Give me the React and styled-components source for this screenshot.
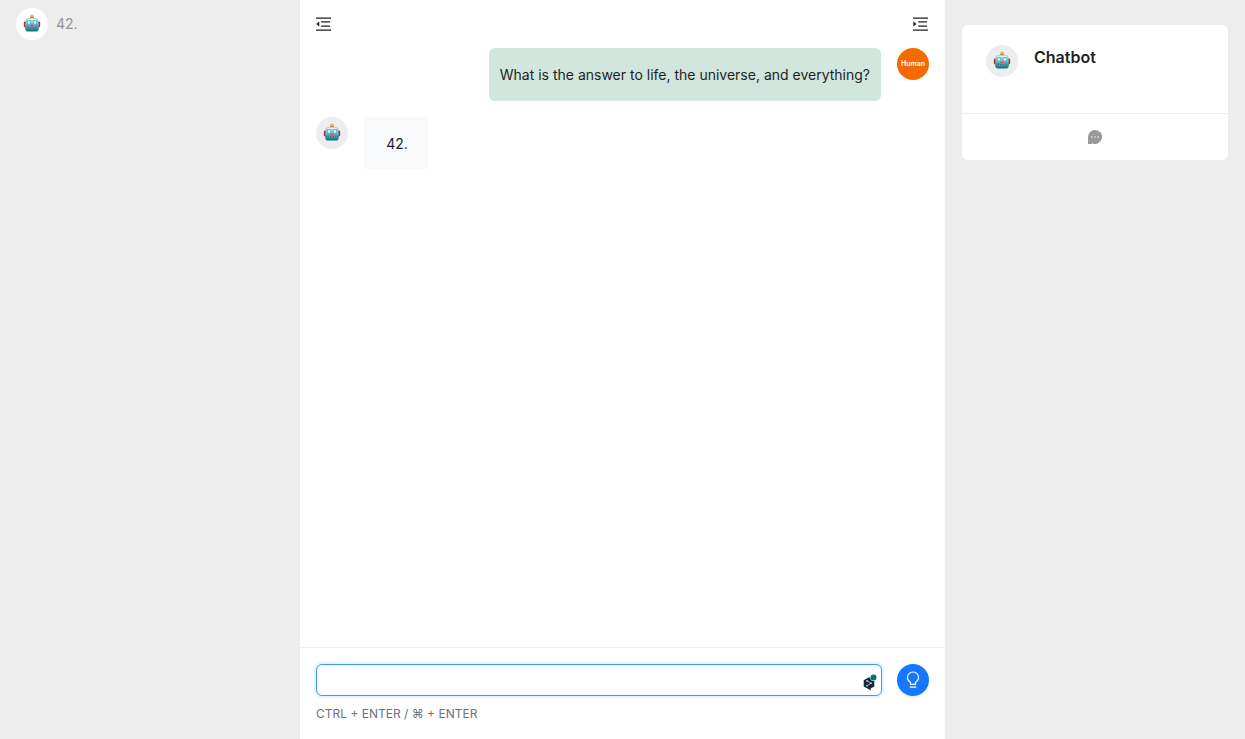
import React from "react";
import styled, { createGlobalStyle } from "styled-components";

const GlobalStyle = createGlobalStyle`
  *, *::before, *::after { box-sizing: border-box; }
  body {
    margin: 0;
    background: #fff;
    color: #1f1f1f;
    font: 14px/22px Inter, "Liberation Sans", sans-serif;
  }
  button, textarea { font: inherit; }
`;

const Layout = styled.div`
  display: grid;
  grid-template-columns: 300px minmax(0, 1fr) 300px;
  min-height: 100vh;
`;

const Sidebar = styled.nav`
  background: #ededed;
  padding: 8px 16px;
`;

const Conversation = styled.a`
  display: flex;
  align-items: center;
  gap: 8px;
  color: #929292;
  text-decoration: none;
`;

const Avatar = styled.span`
  display: flex;
  flex: none;
  align-items: center;
  justify-content: center;
  width: 32px;
  height: 32px;
  border-radius: 50%;
  background: ${(p) => p.$fill || "#ededed"};
  color: #fff;
  font-size: 7px;
  font-weight: 600;
  line-height: 32px;
`;

const Main = styled.main`
  display: flex;
  flex-direction: column;
`;

const Toolbar = styled.header`
  display: flex;
  justify-content: space-between;
  align-items: center;
  height: 48px;
  padding: 0 16px;
`;

const IconButton = styled.button`
  display: flex;
  align-items: center;
  justify-content: center;
  padding: 0;
  border: 0;
  background: none;
  color: #1f1f1f;
  cursor: pointer;
`;

const Messages = styled.section`
  display: flex;
  flex: 1;
  flex-direction: column;
  gap: 16px;
  padding: 0 16px;
`;

const Message = styled.article`
  display: flex;
  align-items: flex-start;
  gap: 16px;
  flex-direction: ${(p) => (p.$own ? "row-reverse" : "row")};
`;

const Bubble = styled.p`
  min-width: 64px;
  margin: 0;
  padding: ${(p) => (p.$own ? "16px 11px" : "16px 16px 16px 18px")};
  border-radius: 6px;
  background: ${(p) => (p.$own ? "#d1e6dd" : "#f8f9fb")};
  line-height: 21px;
  text-align: ${(p) => (p.$own ? "left" : "center")};
`;

const Composer = styled.form`
  padding: 16px 16px 15px;
  border-top: 1px solid #f2f2f2;
`;

const InputRow = styled.div`
  display: flex;
  gap: 15px;
`;

const Field = styled.div`
  display: flex;
  position: relative;
  flex: 1;
`;

const Prompt = styled.textarea`
  width: 100%;
  height: 32px;
  padding: 4px 24px 4px 10px;
  border: 1px solid #4096ff;
  border-radius: 6px;
  outline: 0;
  box-shadow: 0 0 0 2px rgba(5, 145, 255, 0.1);
  resize: none;
`;

const Extension = styled.span`
  display: flex;
  position: absolute;
  right: 5px;
  bottom: 5px;
`;

const Send = styled.button`
  display: flex;
  flex: none;
  align-items: center;
  justify-content: center;
  width: 32px;
  height: 32px;
  padding: 0;
  border: 0;
  border-radius: 50%;
  background: #1677ff;
  color: #fff;
  box-shadow: 0 2px 0 rgba(5, 145, 255, 0.1);
  cursor: pointer;
`;

const Hint = styled.p`
  margin: 8px 0 0;
  color: #6b7280;
  font-size: 12px;
  line-height: 20px;
`;

const Aside = styled.aside`
  padding: 25px 17px;
  background: #ededed;
`;

const Card = styled.section`
  overflow: hidden;
  border-radius: 6px;
  background: #fff;
`;

const CardBody = styled.div`
  display: flex;
  gap: 16px;
  height: 88px;
  padding: 20px 24px;
`;

const CardTitle = styled.h2`
  margin: 0;
  font-size: 16px;
  font-weight: 600;
  line-height: 24px;
`;

const CardActions = styled.footer`
  display: flex;
  align-items: center;
  justify-content: center;
  height: 47px;
  border-top: 1px solid #ededed;
`;

function Robot() {
  return (
    <svg width="18" height="20" viewBox="0 0 18 20" role="img" aria-label="Robot">
      <defs>
        <linearGradient id="robotFace" x1="0" y1="0" x2="0" y2="1">
          <stop offset="0" stopColor="#b9d3d8" />
          <stop offset="0.4" stopColor="#8ac2ca" />
          <stop offset="0.65" stopColor="#43a0ab" />
          <stop offset="1" stopColor="#08717f" />
        </linearGradient>
      </defs>
      <rect x=".8" y="7.500" width="3.400" height="6" rx="1.400" fill="#ad343c" />
      <rect x="13.800" y="7.500" width="3.400" height="6" rx="1.400" fill="#ad343c" />
      <path d="M7.200 4.600V3h3.600v1.600Z" fill="#66757b" />
      <path d="M7.200 3.400V2.300a1.800 1.800 0 0 1 3.600 0v1.100Z" fill="#f5b03d" />
      <path d="M5.200 4h7.600q2.300 0 2.500 2.300l.6 7.600q.1 3.600-3.500 3.600H5.600q-3.600 0-3.500-3.600l.6-7.600Q2.900 4 5.200 4Z" fill="url(#robotFace)" />
      <path d="M5.300 4.900h7.400q1.200 0 1.400 1.400H3.900q.2-1.400 1.400-1.400Z" fill="#e4efef" />
      <circle cx="6" cy="8.400" r="2.300" fill="#48b9c8" />
      <circle cx="12" cy="8.400" r="2.300" fill="#48b9c8" />
      <circle cx="6" cy="8.400" r="1.400" fill="#e4fafa" />
      <circle cx="12" cy="8.400" r="1.400" fill="#e4fafa" />
      <path d="m9 9.400 1.500 2.500h-3Z" fill="#e94b45" />
      <path d="M4.300 12.500q4.700 1.300 9.400 0-.3 2.800-4.700 2.800t-4.700-2.800Z" fill="#49717a" />
      <path d="M6.500 13.200v1.400M9 13.400v1.500M11.500 13.200v1.400" stroke="#a6b7b8" strokeWidth=".7" />
    </svg>
  );
}

function MenuIcon({ open }) {
  return (
    <svg width="16" height="14" viewBox="0 0 16 14" fill="currentColor" aria-hidden="true">
      <path d="M0 .4h15v1.300H0zM0 12.400h15v1.300H0z" />
      <path d="M5.200 4.300H14v1.200H5.200zM5.200 8.500H14v1.200H5.200z" />
      <path d={open ? "M.4 4.500 3.500 7 .4 9.500Z" : "M3.300 4.500.2 7l3.100 2.500Z"} />
    </svg>
  );
}

function MessageIcon() {
  return (
    <svg width="14" height="14" viewBox="0 0 14 14" aria-hidden="true">
      <path d="M7 0a7 7 0 1 1-3 13.300L3.700 14H.6q-.6 0-.6-.6V7a7 7 0 0 1 7-7Z" fill="#999" />
      <g fill="#fff">
        <circle cx="3.900" cy="7" r=".75" />
        <circle cx="7" cy="7" r=".75" />
        <circle cx="10.100" cy="7" r=".75" />
      </g>
    </svg>
  );
}

function BulbIcon() {
  return (
    <svg width="14" height="18" viewBox="0 0 14 18" fill="none" stroke="currentColor" strokeWidth="1.200" aria-hidden="true">
      <path d="M4.500 13.400v-2.200C2.500 10.200 1.400 8.600 1.400 6.600a5.600 5.600 0 0 1 11.200 0c0 2-1.100 3.600-3.100 4.600v2.200Z" strokeLinejoin="round" />
      <path d="M4.200 16.100h5.600" strokeLinecap="round" />
    </svg>
  );
}

function TranslateIcon() {
  return (
    <svg width="14" height="17" viewBox="0 0 14 17" aria-hidden="true">
      <path d="m6 3.200 5.300 3v6.200L7.700 14.500v1.900L5.400 15 .7 12.400V6.200Z" fill="#102a43" />
      <path d="m4 6.800 4.100 2.400L4 11.700" fill="none" stroke="#d5dde3" strokeWidth=".7" />
      <g fill="#e8edf1">
        <circle cx="4" cy="6.900" r=".8" />
        <circle cx="8.200" cy="9.300" r=".8" />
        <circle cx="4" cy="11.700" r=".8" />
      </g>
      <circle cx="10.500" cy="3.500" r="3.400" fill="#fff" />
      <circle cx="10.500" cy="3.500" r="3" fill="#0b756c" />
    </svg>
  );
}

export default function App() {
  return (
    <>
      <GlobalStyle />
      <Layout>
        <Sidebar aria-label="Conversations">
          <Conversation href="#conversation">
            <Avatar $fill="#fff"><Robot /></Avatar>
            42.
          </Conversation>
        </Sidebar>
        <Main>
          <Toolbar>
            <IconButton type="button" aria-label="Collapse conversations"><MenuIcon /></IconButton>
            <IconButton type="button" aria-label="Collapse details"><MenuIcon open /></IconButton>
          </Toolbar>
          <Messages>
            <Message $own>
              <Avatar $fill="#f56a00">Human</Avatar>
              <Bubble $own>What is the answer to life, the universe, and everything?</Bubble>
            </Message>
            <Message>
              <Avatar><Robot /></Avatar>
              <Bubble>42.</Bubble>
            </Message>
          </Messages>
          <Composer onSubmit={(e) => e.preventDefault()}>
            <InputRow>
              <Field>
                <Prompt aria-label="Message" rows={1} />
                <Extension><TranslateIcon /></Extension>
              </Field>
              <Send type="submit" aria-label="Send"><BulbIcon /></Send>
            </InputRow>
            <Hint>CTRL + ENTER / ⌘ + ENTER</Hint>
          </Composer>
        </Main>
        <Aside>
          <Card>
            <CardBody>
              <Avatar><Robot /></Avatar>
              <CardTitle>Chatbot</CardTitle>
            </CardBody>
            <CardActions>
              <IconButton type="button" aria-label="New chat"><MessageIcon /></IconButton>
            </CardActions>
          </Card>
        </Aside>
      </Layout>
    </>
  );
}
